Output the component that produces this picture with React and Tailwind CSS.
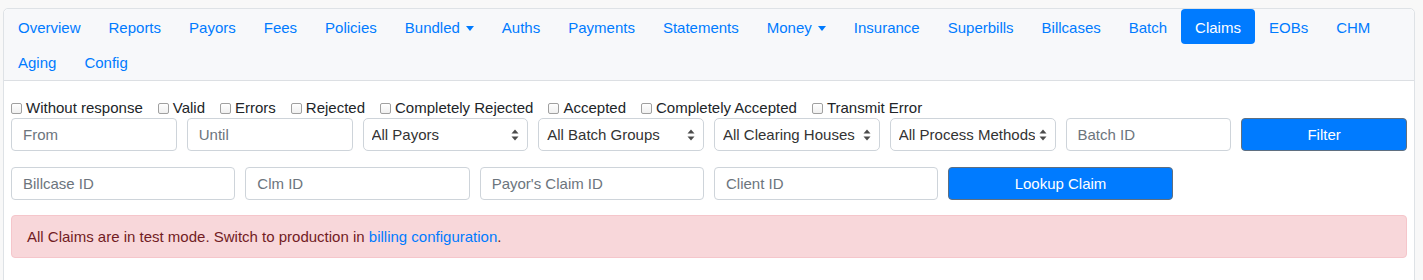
import React from "react";

const tabs = [
  { label: "Overview" },
  { label: "Reports" },
  { label: "Payors" },
  { label: "Fees" },
  { label: "Policies" },
  { label: "Bundled", caret: true },
  { label: "Auths" },
  { label: "Payments" },
  { label: "Statements" },
  { label: "Money", caret: true },
  { label: "Insurance" },
  { label: "Superbills" },
  { label: "Billcases" },
  { label: "Batch" },
  { label: "Claims", active: true },
  { label: "EOBs" },
  { label: "CHM" },
  { label: "Aging" },
  { label: "Config" },
];

const statuses = [
  "Without response",
  "Valid",
  "Errors",
  "Rejected",
  "Completely Rejected",
  "Accepted",
  "Completely Accepted",
  "Transmit Error",
];

function SelectArrows() {
  return (
    <svg width="8" height="12" viewBox="0 0 8 12" className="shrink-0">
      <path d="M4 0.5 L7.5 4.5 L0.5 4.5 Z" fill="#4b4b4b" />
      <path d="M4 11.5 L7.5 7.5 L0.5 7.5 Z" fill="#4b4b4b" />
    </svg>
  );
}

function TextInput({ placeholder }) {
  return (
    <div className="flex h-[33px] items-center rounded-[4px] border border-[#ced4da] bg-white px-[11px] pt-[1px] text-[15px] text-[#6c757d]">
      {placeholder}
    </div>
  );
}

function SelectBox({ label }) {
  return (
    <div className="flex h-[33px] items-center justify-between rounded-[5px] border border-[#ced4da] bg-white pl-[8px] pr-[8px] pt-[1px] text-[15px] text-[#333]">
      <span className="truncate">{label}</span>
      <SelectArrows />
    </div>
  );
}

function PrimaryButton({ children }) {
  return (
    <button
      type="button"
      className="flex h-[33px] w-full items-center justify-center rounded-[4px] border border-[#5f6f80] bg-[#007bff] pt-[1px] text-[15px] text-white"
    >
      {children}
    </button>
  );
}

export default function App() {
  return (
    <div
      className="min-h-screen bg-[#f8f8f8] pl-[3px] pr-[8px] pt-[8px]"
      style={{ fontFamily: '"Liberation Sans", Arial, sans-serif' }}
    >
      <div className="rounded-t-[5px] border border-[#dee2e6] bg-white">
        <div className="rounded-t-[5px] border-b border-[#dcdfe3] bg-[#f7f8fa]">
          <ul className="flex flex-wrap pb-[1px]">
            {tabs.map((tab) => (
              <li key={tab.label}>
                <a
                  className={
                    tab.active
                      ? "flex h-[35px] items-center rounded-[4px] bg-[#007bff] px-[14px] pt-[3px] text-[15px] text-white"
                      : "flex h-[35px] items-center px-[14px] pt-[3px] text-[15px] text-[#007bff]"
                  }
                >
                  {tab.label}
                  {tab.caret ? (
                    <span className="ml-[6px] inline-block h-0 w-0 border-x-[4.5px] border-t-[5px] border-x-transparent border-t-[#007bff]" />
                  ) : null}
                </a>
              </li>
            ))}
          </ul>
        </div>

        <div className="pb-[40px] pl-[7px] pr-[7px] pt-[16px]">
          <div className="flex h-[21px] items-center pt-[2px] text-[15px] text-[#212529]">
            {statuses.map((status) => (
              <label key={status} className="mr-[15px] flex items-center">
                <span className="mr-[4px] inline-block h-[11px] w-[11px] rounded-[2px] border border-[#a0a0a0] bg-gradient-to-b from-white to-[#f0f0f0]" />
                {status}
              </label>
            ))}
          </div>

          <div className="grid grid-cols-8 gap-[10px]">
            <TextInput placeholder="From" />
            <TextInput placeholder="Until" />
            <SelectBox label="All Payors" />
            <SelectBox label="All Batch Groups" />
            <SelectBox label="All Clearing Houses" />
            <SelectBox label="All Process Methods" />
            <TextInput placeholder="Batch ID" />
            <PrimaryButton>Filter</PrimaryButton>
          </div>

          <div className="mt-[16px] grid grid-cols-6 gap-[10px]">
            <TextInput placeholder="Billcase ID" />
            <TextInput placeholder="Clm ID" />
            <TextInput placeholder="Payor's Claim ID" />
            <TextInput placeholder="Client ID" />
            <PrimaryButton>Lookup Claim</PrimaryButton>
          </div>

          <div className="mt-[15px] flex h-[43px] items-center rounded-[4px] border border-[#f5c6cb] bg-[#f8d7da] px-[15px] pt-[2px] text-[15px] text-[#721c24]">
            <span>
              All Claims are in test mode. Switch to production in{" "}
              <a className="text-[#007bff]">billing configuration</a>.
            </span>
          </div>
        </div>
      </div>
    </div>
  );
}
